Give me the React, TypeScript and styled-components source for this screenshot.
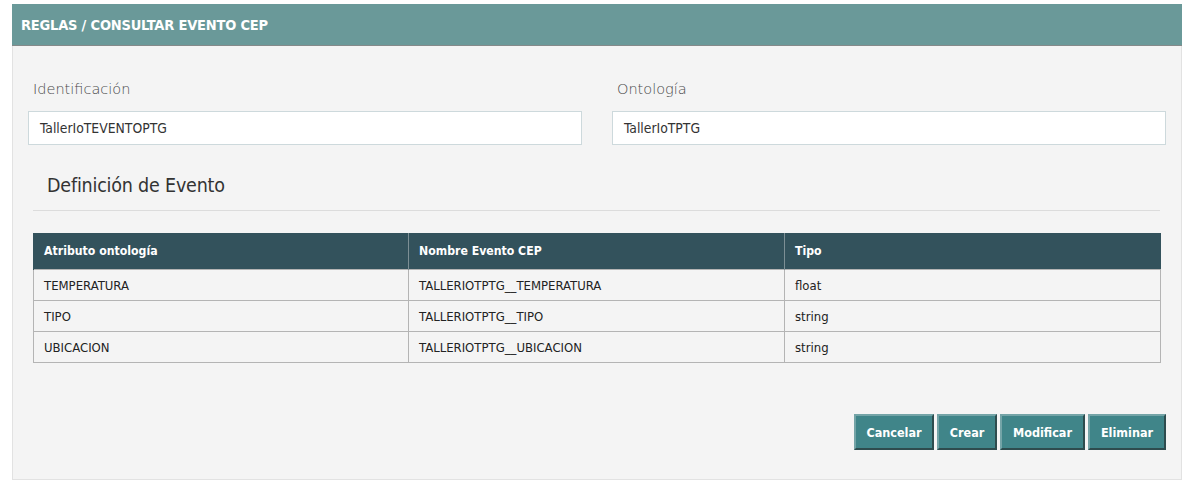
import React from "react";
import styled, { createGlobalStyle } from "styled-components";

const Global = createGlobalStyle`
  html, body { margin: 0; padding: 0; background: #ffffff; }
  body { font-family: "DejaVu Sans", "Noto Sans", sans-serif; font-stretch: condensed; color: #222; }
`;

const Page = styled.div`
  padding: 4px 6px 6px 12px;
`;

const Panel = styled.section`
  border: 1px solid #e2e2e2;
  border-top: none;
  background: #f4f4f4;
  height: 476px;
  box-sizing: border-box;
`;

const Header = styled.header`
  height: 42px;
  box-sizing: border-box;
  background: #6a9999;
  border-bottom: 1px solid #858a8a;
  display: flex;
  align-items: center;
  padding: 0 0 0 9px;
  margin: 0 -1px;
  color: #ffffff;
  font-size: 14.5px;
  font-weight: bold;
  letter-spacing: -0.2px;
`;

const Body = styled.div`
  padding: 0 15px;
`;

const FieldRow = styled.div`
  display: grid;
  grid-template-columns: 1fr 1fr;
  column-gap: 30px;
  padding-top: 33px;
`;

const Field = styled.div`
  display: flex;
  flex-direction: column;
`;

const Label = styled.label`
  font-size: 14.5px;
  font-weight: 300;
  color: #4a4a4a;
  padding-left: 5px;
  height: 20px;
  line-height: 20px;
  margin-bottom: 12px;
`;

const Input = styled.div`
  height: 34px;
  box-sizing: border-box;
  background: #ffffff;
  border: 1px solid #cdd9dc;
  display: flex;
  align-items: center;
  padding-left: 11px;
  font-size: 13.8px;
  color: #333;
`;

const Section = styled.div`
  padding: 0 5px;
`;

const SectionTitle = styled.h3`
  margin: 0 1px 0 0;
  padding: 29px 0 0 14px;
  height: 66px;
  box-sizing: border-box;
  font-size: 19.5px;
  font-weight: normal;
  color: #333;
  letter-spacing: -0.2px;
  border-bottom: 1px solid #dcdcdc;
`;

const Table = styled.table`
  margin-top: 22px;
  width: 1128px;
  border-collapse: collapse;
  font-size: 13px;
  table-layout: fixed;
`;

const Th = styled.th`
  background: #33525c;
  color: #ffffff;
  font-weight: bold;
  font-size: 12.2px;
  text-align: left;
  height: 36px;
  padding: 0 10px;
  border-left: 1px solid #7d8f95;
  &:first-child { border-left: 1px solid #33525c; }
`;

const Td = styled.td`
  height: 30px;
  padding: 0 10px;
  border: 1px solid #b4b4b4;
  color: #222;
`;

const Actions = styled.div`
  display: flex;
  justify-content: flex-end;
  gap: 3px;
  margin-top: 51px;
`;

const Button = styled.button<{ $w: number }>`
  width: ${(p) => p.$w}px;
  height: 36px;
  box-sizing: border-box;
  background: #408589;
  color: #ffffff;
  font-family: inherit;
  font-stretch: condensed;
  font-size: 12.5px;
  font-weight: bold;
  border: 2px solid;
  border-color: #74a4a7 #2e4c4e #2e4c4e #74a4a7;
  padding: 0;
  cursor: pointer;
`;

const rows = [
  ["TEMPERATURA", "TALLERIOTPTG__TEMPERATURA", "float"],
  ["TIPO", "TALLERIOTPTG__TIPO", "string"],
  ["UBICACION", "TALLERIOTPTG__UBICACION", "string"],
];

export default function App() {
  return (
    <>
      <Global />
      <Page>
        <Panel>
          <Header>REGLAS / CONSULTAR EVENTO CEP</Header>
          <Body>
            <FieldRow>
              <Field>
                <Label>Identificación</Label>
                <Input>TallerIoTEVENTOPTG</Input>
              </Field>
              <Field>
                <Label>Ontología</Label>
                <Input>TallerIoTPTG</Input>
              </Field>
            </FieldRow>
            <Section>
              <SectionTitle>Definición de Evento</SectionTitle>
              <Table>
                <colgroup>
                  <col style={{ width: 375 }} />
                  <col style={{ width: 376 }} />
                  <col />
                </colgroup>
                <thead>
                  <tr>
                    <Th>Atributo ontología</Th>
                    <Th>Nombre Evento CEP</Th>
                    <Th>Tipo</Th>
                  </tr>
                </thead>
                <tbody>
                  {rows.map((r) => (
                    <tr key={r[0]}>
                      {r.map((c, i) => (
                        <Td key={i}>{c}</Td>
                      ))}
                    </tr>
                  ))}
                </tbody>
              </Table>
            </Section>
            <Actions>
              <Button $w={80}>Cancelar</Button>
              <Button $w={60}>Crear</Button>
              <Button $w={85}>Modificar</Button>
              <Button $w={78}>Eliminar</Button>
            </Actions>
          </Body>
        </Panel>
      </Page>
    </>
  );
}
